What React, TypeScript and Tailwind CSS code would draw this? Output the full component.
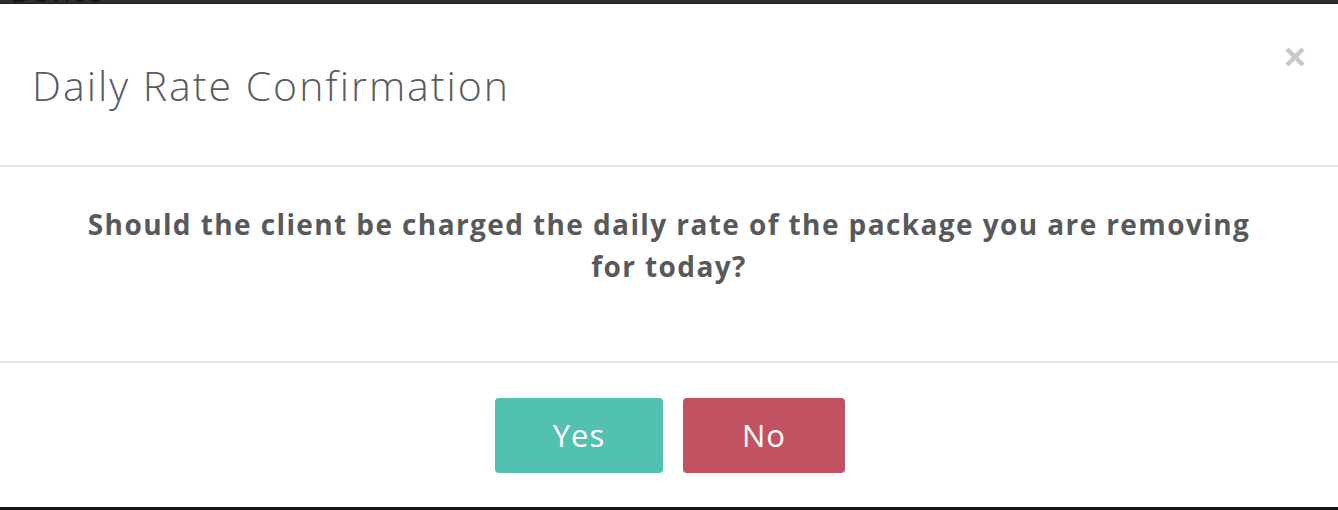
export default function App() {
  return (
    <div className="w-[1338px] h-[510px] flex flex-col bg-white overflow-hidden font-['Open_Sans',sans-serif]">
      {/* page behind the modal, only a sliver shows */}
      <div className="h-[4px] flex bg-[#2e2e2e] border-b border-[#1c1c1c] overflow-hidden">
        <div className="w-[178px] border-r border-[#262626] overflow-hidden">
          <div className="-mt-[24px] pl-[10px] text-[30px] leading-[30px] text-[#151515]">Device</div>
        </div>
        <div className="flex-1" />
      </div>

      <div className="flex-1 flex flex-col">
        <div className="h-[163px] flex items-center justify-between pl-[32px] pr-[33px] border-b-2 border-[#e5e5e5]">
          <h4 className="text-[41px] font-light text-[#585c60] tracking-[2px] pt-[2px]">Daily Rate Confirmation</h4>
          <button className="self-start mt-[43px]">
            <svg width="20" height="20" viewBox="0 0 20 20">
              <path d="M2 2 L18 18 M18 2 L2 18" stroke="#c8c8c8" strokeWidth="4.5" />
            </svg>
          </button>
        </div>

        <div className="h-[194px] pt-[36px] px-[70px] text-center">
          <p className="text-[28px] leading-[42px] font-bold text-[#58595b] tracking-[1.4px]">
            Should the client be charged the daily rate of the package you are removing for today?
          </p>
        </div>

        <div className="flex-1 flex justify-center gap-[20px] pt-[35px] pl-[2px] border-t-2 border-[#e5e5e5]">
          <button className="w-[168px] h-[75px] rounded-[4px] bg-[#52c1b0] text-white text-[31px] tracking-[1px]">Yes</button>
          <button className="w-[162px] h-[75px] rounded-[4px] bg-[#c25262] text-white text-[31px] tracking-[1px]">No</button>
        </div>
      </div>

      <div className="h-[3px] bg-[#161616]" />
    </div>
  );
}
